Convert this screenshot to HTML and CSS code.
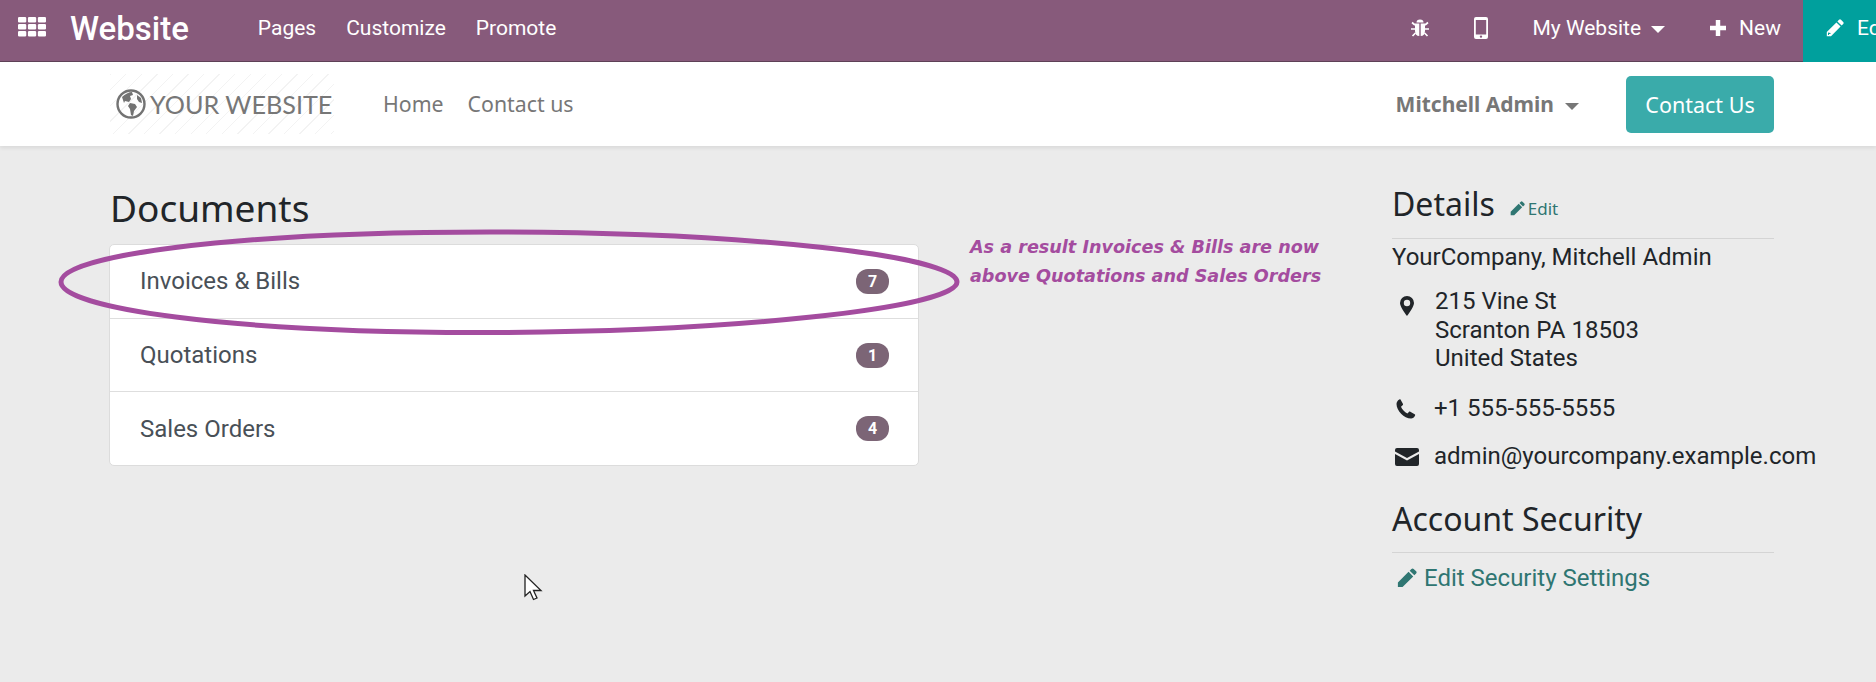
FILE: index.html
```html
<!DOCTYPE html>
<html lang="en">
<head>
    <meta charset="UTF-8">
    <meta name="viewport" content="width=device-width, initial-scale=1.0">
    <title>Documents</title>
    <link rel="stylesheet" href="styles.css">
</head>
<body>
    <div class="topbar">
        <svg class="apps" viewBox="0 0 22 22" width="28" height="22" preserveAspectRatio="none"><g fill="#fff"><rect x="0" y="1" width="6.500" height="5.500" rx="1"/><rect x="7.800" y="1" width="6.500" height="5.500" rx="1"/><rect x="15.600" y="1" width="6.400" height="5.500" rx="1"/><rect x="0" y="8" width="6.500" height="5.500" rx="1"/><rect x="7.800" y="8" width="6.500" height="5.500" rx="1"/><rect x="15.600" y="8" width="6.400" height="5.500" rx="1"/><rect x="0" y="15" width="6.500" height="5.500" rx="1"/><rect x="7.800" y="15" width="6.500" height="5.500" rx="1"/><rect x="15.600" y="15" width="6.400" height="5.500" rx="1"/></g></svg>
        <span class="brand">Website</span>
        <a class="menu first">Pages</a>
        <a class="menu">Customize</a>
        <a class="menu">Promote</a>
        <div class="topbar-right">
            <svg class="bug" viewBox="0 0 20 20" width="20" height="20"><g fill="#fff"><path d="M6.500 4.500a3.500 3 0 0 1 7 0z"/><path d="M5 5.500h4.300v12.500c-2.600 0-4.300-2-4.300-5zM10.700 5.500H15V13c0 3-1.700 5-4.300 5z"/></g><g stroke="#fff" stroke-width="1.700" fill="none"><path d="M5 7 2 4.500M15 7l3-2.500M5 11H1M15 11h4M5.500 15 2.500 18M14.500 15l3 3"/></g></svg>
            <svg class="phone" viewBox="0 0 14 22" width="14" height="22"><path fill="#fff" fill-rule="evenodd" d="M2 0h10a2 2 0 0 1 2 2v18a2 2 0 0 1-2 2H2a2 2 0 0 1-2-2V2a2 2 0 0 1 2-2zM1.800 3v14.500h10.400V3zM7 18.400a1.200 1.200 0 1 0 0 2.400 1.200 1.200 0 0 0 0-2.400z"/></svg>
            <a class="menu site">My Website<span class="caret"></span></a>
            <svg class="plus" viewBox="0 0 18 18" width="16" height="16"><path fill="#fff" d="M6.500 0h5v6.500H18v5h-6.500V18h-5v-6.500H0v-5h6.500z"/></svg>
            <a class="menu new">New</a>
            <div class="edit-btn">
                <svg viewBox="0 0 18 18" width="18" height="18"><path fill="#fff" d="M13 .8a1.500 1.500 0 0 1 2 0l2.200 2.200a1.500 1.500 0 0 1 0 2l-1.600 1.600-4.200-4.200zM10.400 3.400l4.200 4.200L5 17.200H.8V13zM2 13.500v2.500h1v-1h1.500v-1z"/></svg>
                <span>Edit</span>
            </div>
        </div>
    </div>

    <div class="header">
        <div class="logo">
            <svg viewBox="0 0 30 30" width="30" height="30"><circle cx="15" cy="15" r="13.500" fill="none" stroke="#737373" stroke-width="2.400"/><path fill="#737373" d="M6 8c3-3 7-5 10-5l1 3-3 1 1 3-2 3-4-1-1 2zM14 14l5 1 2 3-3 4-1 5-2-1-1-6-2-3zM21 6l4 3 1 5-3-1-2-3z"/></svg>
            <span>YOUR WEBSITE</span>
        </div>
        <a class="nav-link">Home</a>
        <a class="nav-link">Contact us</a>
        <a class="user">Mitchell Admin<span class="caret"></span></a>
        <a class="contact-btn">Contact Us</a>
    </div>

    <div class="main">
        <div class="docs">
            <h1>Documents</h1>
            <div class="card">
                <div class="row"><span>Invoices &amp; Bills</span><span class="badge">7</span></div>
                <div class="row"><span>Quotations</span><span class="badge">1</span></div>
                <div class="row"><span>Sales Orders</span><span class="badge">4</span></div>
            </div>
        </div>
        <div class="details">
            <div class="details-head">
                <h2>Details</h2>
                <a class="edit-link">
                    <svg viewBox="0 0 18 18" width="15" height="15"><path fill="#2f7672" d="M13 .8a1.500 1.500 0 0 1 2 0l2.200 2.200a1.500 1.500 0 0 1 0 2l-1.600 1.600-4.200-4.200zM10.400 3.400l4.200 4.200L5 17.200H.8V13z"/></svg>Edit
                </a>
            </div>
            <div class="company">YourCompany, Mitchell Admin</div>
            <div class="info address">
                <svg viewBox="0 0 14 20" width="14" height="20"><path fill="#212529" fill-rule="evenodd" d="M7 0a7 7 0 0 1 7 7c0 3-4 9-7 13C4 16 0 10 0 7a7 7 0 0 1 7-7zm0 3.800a3.200 3.200 0 1 0 0 6.400 3.200 3.200 0 0 0 0-6.400z"/></svg>
                <div>215 Vine St<br>Scranton PA 18503<br>United States</div>
            </div>
            <div class="info phone-row">
                <svg viewBox="0 0 20 20" width="20" height="20"><path fill="#212529" d="M4.500.5 7 5c.2.500 0 1-.4 1.300L5 7.800c1 2.600 3.600 5.400 6.400 6.700l1.500-1.600c.4-.4.900-.5 1.400-.2l4.400 2.500c.5.300.6.800.4 1.300-.8 1.800-2.300 3-4 3C8 19.500.5 11.500.5 5 .5 3.300 1.600 1.400 3.300.5c.5-.2 1-.2 1.200 0z"/></svg>
                <div>+1 555-555-5555</div>
            </div>
            <div class="info mail-row">
                <svg viewBox="0 0 24 18" width="24" height="18"><path fill="#212529" d="M2 0h20a2 2 0 0 1 2 2v1.500L12 10 0 3.500V2a2 2 0 0 1 2-2zM0 6l12 6.500L24 6v10a2 2 0 0 1-2 2H2a2 2 0 0 1-2-2z"/></svg>
                <div>admin@yourcompany.example.com</div>
            </div>
            <h2 class="security">Account Security</h2>
            <a class="security-link">
                <svg viewBox="0 0 18 18" width="20" height="20"><path fill="#2f7672" d="M13 .8a1.500 1.500 0 0 1 2 0l2.200 2.200a1.500 1.500 0 0 1 0 2l-1.600 1.600-4.200-4.200zM10.400 3.400l4.200 4.200L5 17.200H.8V13z"/></svg>Edit Security Settings
            </a>
        </div>
    </div>

    <!-- drawn over the screenshot -->
    <svg class="ring" viewBox="0 0 910 115" width="910" height="115"><path fill="none" stroke="#a44c9f" stroke-width="5" d="M3 54C3 28 170 4 432 4 690 4 899 28 899 54 899 80 670 104.500 420 104.500 170 104.500 3 80 3 54z"/></svg>
    <div class="note">As a result Invoices &amp; Bills are now<br>above Quotations and Sales Orders</div>
    <svg class="cursor" viewBox="0 0 20 28" width="20" height="28"><path fill="#fff" stroke="#222" stroke-width="1.300" d="M1 1v21l5-4.500 3.500 8 3.500-1.500-3.500-7.500H17z"/></svg>
</body>
</html>
```

FILE: styles.css
```css
html, body {
    margin: 0;
    height: 100%;
    overflow: hidden;
}
body {
    position: relative;
    background-color: #ebebeb;
    color: #212529;
    font-family: Roboto, sans-serif;
}
a {
    color: inherit;
    text-decoration: none;
}
svg {
    flex: none;
}
.caret {
    display: inline-block;
    border-top: 7px solid currentColor;
    border-left: 7px solid transparent;
    border-right: 7px solid transparent;
    vertical-align: middle;
}

.topbar {
    display: flex;
    align-items: center;
    height: 61px;
    background-color: #875a7b;
    border-bottom: 1px solid #5f4257;
    color: #fff;
}
.apps {
    margin-left: 18px;
    margin-top: -7px;
}
.brand {
    margin-left: 24px;
    font-size: 33px;
    font-weight: 500;
    margin-top: -5px;
}
.menu {
    font-size: 21px;
    margin-left: 30px;
    margin-top: -5px;
}
.menu.first {
    margin-left: 69px;
}
.topbar-right {
    display: flex;
    align-items: center;
    margin-left: auto;
    height: 100%;
}
.bug {
    margin-top: -5px;
}
.phone {
    margin-left: 44px;
    margin-top: -5px;
}
.menu.site {
    margin-left: 44px;
}
.menu.site .caret {
    margin-left: 10px;
}
.plus {
    margin-left: 45px;
    margin-top: -5px;
}
.menu.new {
    margin-left: 13px;
}
.edit-btn {
    display: flex;
    align-items: center;
    gap: 13px;
    box-sizing: border-box;
    width: 73px;
    height: 62px;
    margin-left: 22px;
    padding-left: 23px;
    padding-bottom: 5px;
    background-color: #00a09d;
    font-size: 21px;
    overflow: hidden;
    white-space: nowrap;
}

.header {
    display: flex;
    align-items: center;
    height: 84px;
    padding: 0 102px 0 110px;
    background-color: #fff;
    box-shadow: 0 2px 4px rgba(0, 0, 0, 0.08);
    font-family: "Noto Sans", sans-serif;
    color: #777;
}
.logo {
    display: flex;
    align-items: center;
    gap: 4px;
    box-sizing: border-box;
    width: 224px;
    height: 60px;
    padding-left: 6px;
    background-image: repeating-linear-gradient(135deg, #f3f3f3 0, #f3f3f3 1px, #fff 1px, #fff 11px);
    font-family: Lato, sans-serif;
    font-size: 25.200px;
    white-space: nowrap;
}
.nav-link {
    font-size: 21.300px;
    margin-left: 24px;
    margin-top: -1px;
}
.logo + .nav-link {
    margin-left: 49px;
}
.user {
    margin-left: auto;
    font-size: 21px;
    font-weight: 700;
}
.user .caret {
    margin-left: 11px;
}
.contact-btn {
    box-sizing: border-box;
    width: 148px;
    height: 57px;
    margin-left: 47px;
    background-color: #3aabaa;
    border-radius: 5px;
    color: #fff;
    font-size: 21.500px;
    line-height: 57px;
    text-align: center;
}

.main {
    display: flex;
    justify-content: space-between;
    padding: 0 102px 0 110px;
}
.docs {
    width: 809px;
}
h1 {
    margin: 40px 0 14px;
    font-family: "Noto Sans", sans-serif;
    font-size: 37px;
    font-weight: 400;
    line-height: 44px;
}
.card {
    margin-left: -1px;
    background-color: #fff;
    border: 1px solid #dcdcdc;
    border-radius: 5px;
}
.row {
    display: flex;
    align-items: center;
    justify-content: space-between;
    height: 72.700px;
    padding: 0 29px 0 30px;
    border-top: 1px solid #dedede;
    color: #495057;
    font-size: 24px;
}
.row:first-child {
    border-top: 0;
}
.badge {
    width: 33px;
    height: 25px;
    border-radius: 12px;
    background-color: #7c6576;
    color: #fff;
    font-size: 16px;
    font-weight: 700;
    line-height: 25px;
    text-align: center;
}

.details {
    width: 382px;
    font-size: 24px;
}
.details-head {
    display: flex;
    align-items: baseline;
    gap: 15px;
    margin-top: 36px;
    padding-bottom: 12px;
    border-bottom: 1px solid #d4d4d4;
}
h2 {
    margin: 0;
    font-family: "Noto Sans", sans-serif;
    font-size: 32px;
    font-weight: 400;
    line-height: 44px;
}
.edit-link {
    display: flex;
    align-items: center;
    gap: 3px;
    margin-top: -2px;
    color: #2f7672;
    font-family: "Noto Sans", sans-serif;
    font-size: 17px;
}
.company {
    margin-top: 4px;
    line-height: 28px;
}
.info {
    display: flex;
    white-space: nowrap;
    line-height: 28.500px;
}
.address {
    margin-top: 16px;
}
.address svg {
    margin: 9px 21px 0 8px;
}
.phone-row {
    margin-top: 21px;
}
.phone-row svg {
    margin: 5px 18px 0 4px;
}
.mail-row {
    margin-top: 20px;
}
.mail-row svg {
    margin: 6px 15px 0 3px;
}
.security {
    margin-top: 26px;
    padding-bottom: 11px;
    border-bottom: 1px solid #d4d4d4;
}
.security-link {
    display: flex;
    align-items: center;
    gap: 7px;
    margin-top: 11px;
    padding-left: 5px;
    color: #2f7672;
}

.ring {
    position: absolute;
    left: 58px;
    top: 228px;
}
.note {
    position: absolute;
    left: 970px;
    top: 233px;
    color: #a44c9f;
    font-family: "DejaVu Sans", sans-serif;
    font-size: 17.600px;
    font-style: italic;
    font-weight: 700;
    line-height: 29px;
    white-space: nowrap;
}
.cursor {
    position: absolute;
    left: 524px;
    top: 574px;
}
```
